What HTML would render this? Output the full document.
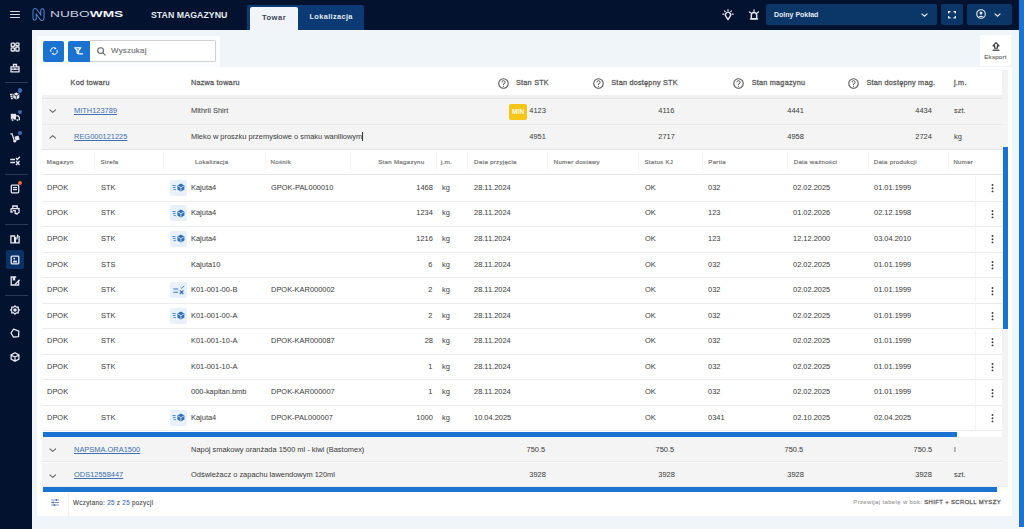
<!DOCTYPE html><html><head><meta charset="utf-8"><style>
*{box-sizing:border-box;margin:0;padding:0}
html,body{width:1024px;height:529px;overflow:hidden;background:#f0f5fa;font-family:"Liberation Sans",sans-serif;color:#333}
.a{position:absolute}
.t{position:absolute;white-space:nowrap}
.r{text-align:right}
.d{font-size:8.05px;color:#424242;-webkit-text-stroke:0.04px currentColor;transform:scaleX(0.925);transform-origin:0 50%}
.rt{transform-origin:100% 50%}
.nh{font-size:6.1px;color:#757575;letter-spacing:0.3px;-webkit-text-stroke:0.2px #757575}
.mh{font-size:7.25px;color:#5e5e5e;letter-spacing:0.24px;-webkit-text-stroke:0.3px #5e5e5e}
.lk{color:#3f72b3;text-decoration:underline;text-decoration-thickness:0.5px;text-underline-offset:1.2px}
svg{position:absolute;overflow:visible}
</style></head><body>
<div class="a" style="left:0px;top:0px;width:1019px;height:30px;background:#03122f;"></div>
<div class="a" style="left:0px;top:30px;width:32px;height:499px;background:#03122f;"></div>
<div class="a" style="left:1019px;top:0px;width:5px;height:527px;background:#1a73d0;"></div>
<div class="a" style="left:10px;top:11.2px;width:10px;height:1.3px;background:#d5d9e1;border-radius:0.6px"></div>
<div class="a" style="left:10px;top:14.2px;width:10px;height:1.3px;background:#d5d9e1;border-radius:0.6px"></div>
<div class="a" style="left:10px;top:17.2px;width:10px;height:1.3px;background:#d5d9e1;border-radius:0.6px"></div>
<svg style="left:31.5px;top:7.5px" width="13" height="13" viewBox="0 0 13 13"><defs><linearGradient id="lg" x1="0" y1="0" x2="1" y2="1"><stop offset="0" stop-color="#4a86cc"/><stop offset="1" stop-color="#6d8ad8"/></linearGradient></defs><path d="M2.6 10.6 V3 Q2.6 1.6 3.7 2.6 L9.3 10.4 Q10.4 11.4 10.4 10 V2.4" fill="none" stroke="url(#lg)" stroke-width="4.2" stroke-linecap="round" stroke-linejoin="round"/><path d="M2.6 10.6 V3 Q2.6 1.6 3.7 2.6 L9.3 10.4 Q10.4 11.4 10.4 10 V2.4" fill="none" stroke="#03122f" stroke-width="2.3" stroke-linecap="round" stroke-linejoin="round"/></svg>
<div class="t " style="left:50px;top:8px;height:12px;line-height:12px;font-size:8.7px;color:#c9cfdb;transform:scaleX(1.58);transform-origin:0 0">NUBO<b style="font-weight:900;color:#f2f4f8">WMS</b></div>
<div class="t " style="left:150.5px;top:6.5px;height:16px;line-height:16px;font-size:9.4px;font-weight:bold;color:#e6eaf0;transform:scaleX(0.935);transform-origin:0 0">STAN MAGAZYNU</div>
<div class="a" style="left:247px;top:5px;width:117px;height:25px;background:#0b3a74;border-radius:2px 2px 0 0"></div>
<div class="a" style="left:250px;top:7px;width:48px;height:23px;background:#f1f5fa;border-radius:2px 2px 0 0"></div>
<div class="t " style="left:262px;top:8.5px;height:18px;line-height:18px;font-size:7.6px;font-weight:bold;color:#3a4656;letter-spacing:0.45px">Towar</div>
<div class="t " style="left:309.5px;top:8px;height:18px;line-height:18px;font-size:7.4px;font-weight:bold;color:#e6eaf0;letter-spacing:0.35px">Lokalizacja</div>
<div class="a" style="left:766px;top:4px;width:171px;height:21px;background:#0b3768;border-radius:2px"></div>
<div class="t " style="left:774px;top:4px;height:21px;line-height:21px;font-size:7px;font-weight:bold;color:#e6eaf0">Dolny Pokład</div>
<svg style="left:921px;top:13px" width="7" height="4" viewBox="0 0 7 4"><path d="M0.6 0.6 L3.5 3.3 L6.4 0.6" fill="none" stroke="#e6eaf0" stroke-width="1.2"/></svg>
<div class="a" style="left:941px;top:4px;width:22px;height:21px;background:#0b3768;border-radius:2px"></div>
<svg style="left:948px;top:10.5px" width="8" height="7.5" viewBox="0 0 8 7.5"><path d="M0.6 2.5 V0.6 H2.6 M5.4 0.6 H7.4 V2.5 M7.4 5 V6.9 H5.4 M2.6 6.9 H0.6 V5" fill="none" stroke="#e6eaf0" stroke-width="1.2"/></svg>
<div class="a" style="left:967px;top:4px;width:45px;height:21px;background:#0b3768;border-radius:2px"></div>
<svg style="left:976px;top:9px" width="10" height="10" viewBox="0 0 10 10"><circle cx="5" cy="5" r="4.3" fill="none" stroke="#e6eaf0" stroke-width="1.1"/><circle cx="5" cy="4" r="1.5" fill="#e6eaf0"/><path d="M2.3 8 Q5 5.5 7.7 8" fill="#e6eaf0"/></svg>
<svg style="left:994px;top:13px" width="7" height="4" viewBox="0 0 7 4"><path d="M0.6 0.6 L3.5 3.3 L6.4 0.6" fill="none" stroke="#e6eaf0" stroke-width="1.2"/></svg>
<svg style="left:722px;top:8.5px" width="12" height="12" viewBox="0 0 12 12"><path d="M6 10.6 L3.9 7.4 A2.6 2.6 0 1 1 8.1 7.4 Z" fill="none" stroke="#e6eaf0" stroke-width="1.35" stroke-linejoin="round"/><path d="M6 0.6 V1.6 M2.6 1.9 L3.2 2.5 M9.4 1.9 L8.8 2.5 M0.9 5.2 H1.8 M10.2 5.2 H11.1" stroke="#e6eaf0" stroke-width="1.2" stroke-linecap="round"/></svg>
<svg style="left:747.5px;top:8.5px" width="12" height="12" viewBox="0 0 12 12"><path d="M3.3 9.8 V6.2 A2.7 2.7 0 0 1 8.7 6.2 V9.8 Z" fill="none" stroke="#e6eaf0" stroke-width="1.4" stroke-linejoin="round"/><path d="M1.8 10 H10.2" stroke="#e6eaf0" stroke-width="1.2"/><path d="M6 1 V2.2 M1.6 3 L2.5 3.9 M10.4 3 L9.5 3.9" stroke="#e6eaf0" stroke-width="1.3" stroke-linecap="round"/></svg>
<div class="a" style="left:37px;top:36px;width:183px;height:31px;background:#fbfcfe;"></div>
<div class="a" style="left:43px;top:40.5px;width:21px;height:21.5px;background:#1a73d0;border-radius:2px"></div>
<svg style="left:49.6px;top:47.3px" width="8" height="8" viewBox="0 0 8 8"><path d="M1.1 5 A2.9 2.9 0 0 1 5.3 1.2 M6.9 3 A2.9 2.9 0 0 1 2.7 6.8" fill="none" stroke="#fff" stroke-width="1"/><path d="M4.5 0.1 L6.6 1.5 L4.6 2.6 Z M3.5 7.9 L1.4 6.5 L3.4 5.4 Z" fill="#fff"/></svg>
<div class="a" style="left:68px;top:40.5px;width:22px;height:21.5px;background:#1a73d0;border-radius:2px 0 0 2px"></div>
<svg style="left:74.2px;top:46.8px" width="10" height="8" viewBox="0 0 10 8"><path d="M0.7 0.7 H6.9 L4.6 3.6 V6.9 L3 6 V3.6 Z" fill="#fff" fill-opacity="0.35" stroke="#fff" stroke-width="1.1" stroke-linejoin="round"/><path d="M5.6 6.8 H8.6" stroke="#fff" stroke-width="1.3" stroke-linecap="round"/></svg>
<div class="a" style="left:90px;top:40.3px;width:126px;height:21.7px;background:#fff;border:1px solid #cdd0d4;border-left:none;border-radius:0 2px 2px 0"></div>
<svg style="left:97.3px;top:46.8px" width="9" height="9" viewBox="0 0 9 9"><circle cx="3.6" cy="3.6" r="2.9" fill="none" stroke="#666" stroke-width="1.1"/><path d="M5.7 5.7 L8.4 8.4" stroke="#666" stroke-width="1.2"/></svg>
<div class="t " style="left:111px;top:39.6px;height:21px;line-height:21px;font-size:7.9px;color:#707070;letter-spacing:0.25px;-webkit-text-stroke:0.15px #707070">Wyszukaj</div>
<div class="a" style="left:980px;top:35px;width:31px;height:31px;background:#fff;"></div>
<svg style="left:992px;top:41.5px" width="8" height="9" viewBox="0 0 8 9"><path d="M4 0.7 L1 3.9 H2.7 V6.2 H5.3 V3.9 H7 Z" fill="none" stroke="#333" stroke-width="1.15" stroke-linejoin="round"/><path d="M0.6 8.2 H7.4" stroke="#333" stroke-width="1.2"/></svg>
<div class="t " style="left:980px;top:52.3px;height:10px;line-height:10px;font-size:6.1px;color:#6a6a6a;width:31px;text-align:center;letter-spacing:0.25px;-webkit-text-stroke:0.15px #6a6a6a">Eksport</div>
<div class="a" style="left:37px;top:67px;width:975px;height:449px;background:#fff;"></div>
<div class="a" style="left:1002px;top:70px;width:6px;height:417px;background:#f2f2f2;"></div>
<div class="t mh" style="left:70.6px;top:68px;height:30px;line-height:30px;">Kod towaru</div>
<div class="t mh" style="left:191px;top:68px;height:30px;line-height:30px;">Nazwa towaru</div>
<svg style="left:497.6px;top:77.5px" width="11" height="11" viewBox="0 0 11 11"><circle cx="5.5" cy="5.5" r="4.75" fill="none" stroke="#555" stroke-width="1.05"/><path d="M3.9 4.3 A1.6 1.6 0 1 1 5.5 5.9 V6.9" fill="none" stroke="#555" stroke-width="1"/><circle cx="5.5" cy="8.3" r="0.6" fill="#555"/></svg>
<div class="t mh" style="left:516px;top:68px;height:30px;line-height:30px;">Stan STK</div>
<svg style="left:592.7px;top:77.5px" width="11" height="11" viewBox="0 0 11 11"><circle cx="5.5" cy="5.5" r="4.75" fill="none" stroke="#555" stroke-width="1.05"/><path d="M3.9 4.3 A1.6 1.6 0 1 1 5.5 5.9 V6.9" fill="none" stroke="#555" stroke-width="1"/><circle cx="5.5" cy="8.3" r="0.6" fill="#555"/></svg>
<div class="t mh" style="left:611.3px;top:68px;height:30px;line-height:30px;">Stan dostępny STK</div>
<svg style="left:733.4px;top:77.5px" width="11" height="11" viewBox="0 0 11 11"><circle cx="5.5" cy="5.5" r="4.75" fill="none" stroke="#555" stroke-width="1.05"/><path d="M3.9 4.3 A1.6 1.6 0 1 1 5.5 5.9 V6.9" fill="none" stroke="#555" stroke-width="1"/><circle cx="5.5" cy="8.3" r="0.6" fill="#555"/></svg>
<div class="t mh" style="left:751.7px;top:68px;height:30px;line-height:30px;">Stan magazynu</div>
<svg style="left:848px;top:77.5px" width="11" height="11" viewBox="0 0 11 11"><circle cx="5.5" cy="5.5" r="4.75" fill="none" stroke="#555" stroke-width="1.05"/><path d="M3.9 4.3 A1.6 1.6 0 1 1 5.5 5.9 V6.9" fill="none" stroke="#555" stroke-width="1"/><circle cx="5.5" cy="8.3" r="0.6" fill="#555"/></svg>
<div class="t mh" style="left:866.4px;top:68px;height:30px;line-height:30px;">Stan dostępny mag.</div>
<div class="t mh" style="left:954px;top:68px;height:30px;line-height:30px;">j.m.</div>
<div class="a" style="left:42px;top:94.6px;width:960px;height:4px;background:#f1f1f1;"></div>
<div class="a" style="left:42px;top:98px;width:960px;height:1px;background:#e6e6e6;"></div>
<div class="a" style="left:42px;top:98.8px;width:966px;height:25.7px;background:#f4f4f4;"></div>
<div class="a" style="left:42px;top:123.5px;width:960px;height:1px;background:#e9e9e9;"></div>
<svg style="left:49.3px;top:109.24999999999999px" width="7.5" height="4" viewBox="0 0 7.5 4"><path d="M0.6 0.6 L3.75 3.4 L6.9 0.6" fill="none" stroke="#5c5c5c" stroke-width="1.05"/></svg>
<div class="t d lk" style="left:73.5px;top:97.89999999999999px;height:25.7px;line-height:25.7px;">MITH123789</div>
<div class="t d" style="left:190.7px;top:97.89999999999999px;height:25.7px;line-height:25.7px;">Mithril Shirt</div>
<div class="t d rt" style="right:478.5px;top:97.89999999999999px;height:25.7px;line-height:25.7px;">4123</div>
<div class="t d rt" style="right:349.5px;top:97.89999999999999px;height:25.7px;line-height:25.7px;">4116</div>
<div class="t d rt" style="right:220.5px;top:97.89999999999999px;height:25.7px;line-height:25.7px;">4441</div>
<div class="t d rt" style="right:92.29999999999995px;top:97.89999999999999px;height:25.7px;line-height:25.7px;">4434</div>
<div class="t d" style="left:954px;top:97.89999999999999px;height:25.7px;line-height:25.7px;">szt.</div>
<div class="a" style="left:509.3px;top:103.6px;width:17.6px;height:16.4px;background:#f6c519;border-radius:2px"></div>
<div class="t " style="left:509.3px;top:103.8px;height:16px;line-height:16px;width:17.6px;text-align:center;font-size:6.6px;font-weight:bold;color:#fffbea;letter-spacing:0.1px">MIN</div>
<div class="a" style="left:42px;top:124.5px;width:966px;height:25.4px;background:#f4f4f4;"></div>
<div class="a" style="left:42px;top:148.9px;width:960px;height:1px;background:#e9e9e9;"></div>
<svg style="left:49.3px;top:134.79999999999998px" width="7.5" height="4" viewBox="0 0 7.5 4"><path d="M0.6 3.4 L3.75 0.6 L6.9 3.4" fill="none" stroke="#5c5c5c" stroke-width="1.05"/></svg>
<div class="t d lk" style="left:73.5px;top:123.6px;height:25.4px;line-height:25.4px;">REG000121225</div>
<div class="t d" style="left:190.7px;top:123.6px;height:25.4px;line-height:25.4px;">Mleko w proszku przemysłowe o smaku waniliowym<span style="display:inline-block;width:0.8px;height:9px;background:#222;vertical-align:middle;margin-left:0.3px"></span></div>
<div class="t d rt" style="right:478.5px;top:123.6px;height:25.4px;line-height:25.4px;">4951</div>
<div class="t d rt" style="right:349.5px;top:123.6px;height:25.4px;line-height:25.4px;">2717</div>
<div class="t d rt" style="right:220.5px;top:123.6px;height:25.4px;line-height:25.4px;">4958</div>
<div class="t d rt" style="right:92.29999999999995px;top:123.6px;height:25.4px;line-height:25.4px;">2724</div>
<div class="t d" style="left:954px;top:123.6px;height:25.4px;line-height:25.4px;">kg</div>
<div class="a" style="left:42px;top:149px;width:960px;height:1px;background:#e6e6e6;"></div>
<div class="a" style="left:94.2px;top:153px;width:0.8px;height:18px;background:#f5f5f5;"></div>
<div class="a" style="left:163.2px;top:153px;width:0.8px;height:18px;background:#f5f5f5;"></div>
<div class="a" style="left:264.5px;top:153px;width:0.8px;height:18px;background:#f5f5f5;"></div>
<div class="a" style="left:350.3px;top:153px;width:0.8px;height:18px;background:#f5f5f5;"></div>
<div class="a" style="left:435.7px;top:153px;width:0.8px;height:18px;background:#f5f5f5;"></div>
<div class="a" style="left:467.4px;top:153px;width:0.8px;height:18px;background:#f5f5f5;"></div>
<div class="a" style="left:547.3px;top:153px;width:0.8px;height:18px;background:#f5f5f5;"></div>
<div class="a" style="left:638.3px;top:153px;width:0.8px;height:18px;background:#f5f5f5;"></div>
<div class="a" style="left:701.7px;top:153px;width:0.8px;height:18px;background:#f5f5f5;"></div>
<div class="a" style="left:787px;top:153px;width:0.8px;height:18px;background:#f5f5f5;"></div>
<div class="a" style="left:867.6px;top:153px;width:0.8px;height:18px;background:#f5f5f5;"></div>
<div class="a" style="left:947.6px;top:153px;width:0.8px;height:18px;background:#f5f5f5;"></div>
<div class="t nh" style="left:46.8px;top:150px;height:24.5px;line-height:24.5px;">Magazyn</div>
<div class="t nh" style="left:100.5px;top:150px;height:24.5px;line-height:24.5px;">Strefa</div>
<div class="t nh" style="left:195px;top:150px;height:24.5px;line-height:24.5px;">Lokalizacja</div>
<div class="t nh" style="left:270.6px;top:150px;height:24.5px;line-height:24.5px;">Nośnik</div>
<div class="t nh" style="left:474px;top:150px;height:24.5px;line-height:24.5px;">Data przyjęcia</div>
<div class="t nh" style="left:553.7px;top:150px;height:24.5px;line-height:24.5px;">Numer dostawy</div>
<div class="t nh" style="left:644.4px;top:150px;height:24.5px;line-height:24.5px;">Status KJ</div>
<div class="t nh" style="left:708.3px;top:150px;height:24.5px;line-height:24.5px;">Partia</div>
<div class="t nh" style="left:793.7px;top:150px;height:24.5px;line-height:24.5px;">Data ważności</div>
<div class="t nh" style="left:873.7px;top:150px;height:24.5px;line-height:24.5px;">Data produkcji</div>
<div class="t nh" style="left:953.4px;top:150px;height:24.5px;line-height:24.5px;">Numer</div>
<div class="t nh rt" style="right:599.5px;top:150px;height:24.5px;line-height:24.5px;">Stan Magazynu</div>
<div class="t nh" style="left:441px;top:150px;height:24.5px;line-height:24.5px;">j.m.</div>
<div class="a" style="left:42px;top:173.9px;width:960px;height:1.5px;background:#e8e8e8;"></div>
<div class="a" style="left:975px;top:176.45px;width:0.8px;height:23.55px;background:#f5f5f5;"></div>
<div class="t d" style="left:47px;top:174.85px;height:25.55px;line-height:25.55px;">DPOK</div>
<div class="t d" style="left:100.5px;top:174.85px;height:25.55px;line-height:25.55px;">STK</div>
<div class="a" style="left:170px;top:179.75px;width:16.5px;height:16.2px;background:#e8f1fb;border-radius:2px"></div>
<svg style="left:171.5px;top:183.25px" width="13" height="9" viewBox="0 0 13 9"><path d="M0.4 2.6 H3.6 M0.9 4.6 H3.6 M1.6 6.6 H3.8" stroke="#3a78c0" stroke-width="0.9"/><path d="M8.9 0.6 L12.4 2.5 V6.5 L8.9 8.4 L5.4 6.5 V2.5 Z" fill="#2f6fb8"/><path d="M5.9 3 L8.9 4.6 L11.9 3 M8.9 4.6 V8" fill="none" stroke="#e3eefa" stroke-width="0.8"/></svg>
<div class="t d" style="left:191px;top:174.85px;height:25.55px;line-height:25.55px;">Kajuta4</div>
<div class="t d" style="left:271px;top:174.85px;height:25.55px;line-height:25.55px;">GPOK-PAL000010</div>
<div class="t d rt" style="right:591.2px;top:174.85px;height:25.55px;line-height:25.55px;">1468</div>
<div class="t d" style="left:441.6px;top:174.85px;height:25.55px;line-height:25.55px;">kg</div>
<div class="t d" style="left:473.8px;top:174.85px;height:25.55px;line-height:25.55px;">28.11.2024</div>
<div class="t d" style="left:644.8px;top:174.85px;height:25.55px;line-height:25.55px;">OK</div>
<div class="t d" style="left:708.3px;top:174.85px;height:25.55px;line-height:25.55px;">032</div>
<div class="t d" style="left:793.2px;top:174.85px;height:25.55px;line-height:25.55px;">02.02.2025</div>
<div class="t d" style="left:873.6px;top:174.85px;height:25.55px;line-height:25.55px;">01.01.1999</div>
<svg style="left:990.6px;top:184.35px" width="3" height="9" viewBox="0 0 3 9"><circle cx="1.5" cy="1" r="0.95" fill="#3a3a3a"/><circle cx="1.5" cy="4.2" r="0.95" fill="#3a3a3a"/><circle cx="1.5" cy="7.4" r="0.95" fill="#3a3a3a"/></svg>
<div class="a" style="left:42px;top:200.5px;width:960px;height:1px;background:#ededed;"></div>
<div class="a" style="left:975px;top:202.0px;width:0.8px;height:23.55px;background:#f5f5f5;"></div>
<div class="t d" style="left:47px;top:200.4px;height:25.55px;line-height:25.55px;">DPOK</div>
<div class="t d" style="left:100.5px;top:200.4px;height:25.55px;line-height:25.55px;">STK</div>
<div class="a" style="left:170px;top:205.3px;width:16.5px;height:16.2px;background:#e8f1fb;border-radius:2px"></div>
<svg style="left:171.5px;top:208.8px" width="13" height="9" viewBox="0 0 13 9"><path d="M0.4 2.6 H3.6 M0.9 4.6 H3.6 M1.6 6.6 H3.8" stroke="#3a78c0" stroke-width="0.9"/><path d="M8.9 0.6 L12.4 2.5 V6.5 L8.9 8.4 L5.4 6.5 V2.5 Z" fill="#2f6fb8"/><path d="M5.9 3 L8.9 4.6 L11.9 3 M8.9 4.6 V8" fill="none" stroke="#e3eefa" stroke-width="0.8"/></svg>
<div class="t d" style="left:191px;top:200.4px;height:25.55px;line-height:25.55px;">Kajuta4</div>
<div class="t d" style="left:271px;top:200.4px;height:25.55px;line-height:25.55px;"></div>
<div class="t d rt" style="right:591.2px;top:200.4px;height:25.55px;line-height:25.55px;">1234</div>
<div class="t d" style="left:441.6px;top:200.4px;height:25.55px;line-height:25.55px;">kg</div>
<div class="t d" style="left:473.8px;top:200.4px;height:25.55px;line-height:25.55px;">28.11.2024</div>
<div class="t d" style="left:644.8px;top:200.4px;height:25.55px;line-height:25.55px;">OK</div>
<div class="t d" style="left:708.3px;top:200.4px;height:25.55px;line-height:25.55px;">123</div>
<div class="t d" style="left:793.2px;top:200.4px;height:25.55px;line-height:25.55px;">01.02.2026</div>
<div class="t d" style="left:873.6px;top:200.4px;height:25.55px;line-height:25.55px;">02.12.1998</div>
<svg style="left:990.6px;top:209.9px" width="3" height="9" viewBox="0 0 3 9"><circle cx="1.5" cy="1" r="0.95" fill="#3a3a3a"/><circle cx="1.5" cy="4.2" r="0.95" fill="#3a3a3a"/><circle cx="1.5" cy="7.4" r="0.95" fill="#3a3a3a"/></svg>
<div class="a" style="left:42px;top:226.05px;width:960px;height:1px;background:#ededed;"></div>
<div class="a" style="left:975px;top:227.54999999999998px;width:0.8px;height:23.55px;background:#f5f5f5;"></div>
<div class="t d" style="left:47px;top:225.95px;height:25.55px;line-height:25.55px;">DPOK</div>
<div class="t d" style="left:100.5px;top:225.95px;height:25.55px;line-height:25.55px;">STK</div>
<div class="a" style="left:170px;top:230.85px;width:16.5px;height:16.2px;background:#e8f1fb;border-radius:2px"></div>
<svg style="left:171.5px;top:234.35px" width="13" height="9" viewBox="0 0 13 9"><path d="M0.4 2.6 H3.6 M0.9 4.6 H3.6 M1.6 6.6 H3.8" stroke="#3a78c0" stroke-width="0.9"/><path d="M8.9 0.6 L12.4 2.5 V6.5 L8.9 8.4 L5.4 6.5 V2.5 Z" fill="#2f6fb8"/><path d="M5.9 3 L8.9 4.6 L11.9 3 M8.9 4.6 V8" fill="none" stroke="#e3eefa" stroke-width="0.8"/></svg>
<div class="t d" style="left:191px;top:225.95px;height:25.55px;line-height:25.55px;">Kajuta4</div>
<div class="t d" style="left:271px;top:225.95px;height:25.55px;line-height:25.55px;"></div>
<div class="t d rt" style="right:591.2px;top:225.95px;height:25.55px;line-height:25.55px;">1216</div>
<div class="t d" style="left:441.6px;top:225.95px;height:25.55px;line-height:25.55px;">kg</div>
<div class="t d" style="left:473.8px;top:225.95px;height:25.55px;line-height:25.55px;">28.11.2024</div>
<div class="t d" style="left:644.8px;top:225.95px;height:25.55px;line-height:25.55px;">OK</div>
<div class="t d" style="left:708.3px;top:225.95px;height:25.55px;line-height:25.55px;">123</div>
<div class="t d" style="left:793.2px;top:225.95px;height:25.55px;line-height:25.55px;">12.12.2000</div>
<div class="t d" style="left:873.6px;top:225.95px;height:25.55px;line-height:25.55px;">03.04.2010</div>
<svg style="left:990.6px;top:235.45px" width="3" height="9" viewBox="0 0 3 9"><circle cx="1.5" cy="1" r="0.95" fill="#3a3a3a"/><circle cx="1.5" cy="4.2" r="0.95" fill="#3a3a3a"/><circle cx="1.5" cy="7.4" r="0.95" fill="#3a3a3a"/></svg>
<div class="a" style="left:42px;top:251.6px;width:960px;height:1px;background:#ededed;"></div>
<div class="a" style="left:975px;top:253.1px;width:0.8px;height:23.55px;background:#f5f5f5;"></div>
<div class="t d" style="left:47px;top:251.5px;height:25.55px;line-height:25.55px;">DPOK</div>
<div class="t d" style="left:100.5px;top:251.5px;height:25.55px;line-height:25.55px;">STS</div>
<div class="t d" style="left:191px;top:251.5px;height:25.55px;line-height:25.55px;">Kajuta10</div>
<div class="t d" style="left:271px;top:251.5px;height:25.55px;line-height:25.55px;"></div>
<div class="t d rt" style="right:591.2px;top:251.5px;height:25.55px;line-height:25.55px;">6</div>
<div class="t d" style="left:441.6px;top:251.5px;height:25.55px;line-height:25.55px;">kg</div>
<div class="t d" style="left:473.8px;top:251.5px;height:25.55px;line-height:25.55px;">28.11.2024</div>
<div class="t d" style="left:644.8px;top:251.5px;height:25.55px;line-height:25.55px;">OK</div>
<div class="t d" style="left:708.3px;top:251.5px;height:25.55px;line-height:25.55px;">032</div>
<div class="t d" style="left:793.2px;top:251.5px;height:25.55px;line-height:25.55px;">02.02.2025</div>
<div class="t d" style="left:873.6px;top:251.5px;height:25.55px;line-height:25.55px;">01.01.1999</div>
<svg style="left:990.6px;top:261.0px" width="3" height="9" viewBox="0 0 3 9"><circle cx="1.5" cy="1" r="0.95" fill="#3a3a3a"/><circle cx="1.5" cy="4.2" r="0.95" fill="#3a3a3a"/><circle cx="1.5" cy="7.4" r="0.95" fill="#3a3a3a"/></svg>
<div class="a" style="left:42px;top:277.15px;width:960px;height:1px;background:#ededed;"></div>
<div class="a" style="left:975px;top:278.65px;width:0.8px;height:23.55px;background:#f5f5f5;"></div>
<div class="t d" style="left:47px;top:277.04999999999995px;height:25.55px;line-height:25.55px;">DPOK</div>
<div class="t d" style="left:100.5px;top:277.04999999999995px;height:25.55px;line-height:25.55px;">STK</div>
<div class="a" style="left:170px;top:281.95px;width:16.5px;height:16.2px;background:#e8f1fb;border-radius:2px"></div>
<svg style="left:172.5px;top:284.84999999999997px" width="12" height="10" viewBox="0 0 12 10"><path d="M0.3 4 H5.2 M0.3 7.2 H5.2" stroke="#3a78c0" stroke-width="1.1"/><path d="M6.8 5.3 L10.4 9 M10.4 5.3 L6.8 9" fill="none" stroke="#2f6fb8" stroke-width="1.2"/><path d="M7.6 2.3 L8.8 3.4 L11.2 0.8" fill="none" stroke="#3a78c0" stroke-width="0.9"/></svg>
<div class="t d" style="left:191px;top:277.04999999999995px;height:25.55px;line-height:25.55px;">K01-001-00-B</div>
<div class="t d" style="left:271px;top:277.04999999999995px;height:25.55px;line-height:25.55px;">DPOK-KAR000002</div>
<div class="t d rt" style="right:591.2px;top:277.04999999999995px;height:25.55px;line-height:25.55px;">2</div>
<div class="t d" style="left:441.6px;top:277.04999999999995px;height:25.55px;line-height:25.55px;">kg</div>
<div class="t d" style="left:473.8px;top:277.04999999999995px;height:25.55px;line-height:25.55px;">28.11.2024</div>
<div class="t d" style="left:644.8px;top:277.04999999999995px;height:25.55px;line-height:25.55px;">OK</div>
<div class="t d" style="left:708.3px;top:277.04999999999995px;height:25.55px;line-height:25.55px;">032</div>
<div class="t d" style="left:793.2px;top:277.04999999999995px;height:25.55px;line-height:25.55px;">02.02.2025</div>
<div class="t d" style="left:873.6px;top:277.04999999999995px;height:25.55px;line-height:25.55px;">01.01.1999</div>
<svg style="left:990.6px;top:286.54999999999995px" width="3" height="9" viewBox="0 0 3 9"><circle cx="1.5" cy="1" r="0.95" fill="#3a3a3a"/><circle cx="1.5" cy="4.2" r="0.95" fill="#3a3a3a"/><circle cx="1.5" cy="7.4" r="0.95" fill="#3a3a3a"/></svg>
<div class="a" style="left:42px;top:302.7px;width:960px;height:1px;background:#ededed;"></div>
<div class="a" style="left:975px;top:304.2px;width:0.8px;height:23.55px;background:#f5f5f5;"></div>
<div class="t d" style="left:47px;top:302.59999999999997px;height:25.55px;line-height:25.55px;">DPOK</div>
<div class="t d" style="left:100.5px;top:302.59999999999997px;height:25.55px;line-height:25.55px;">STK</div>
<div class="a" style="left:170px;top:307.5px;width:16.5px;height:16.2px;background:#e8f1fb;border-radius:2px"></div>
<svg style="left:171.5px;top:311.0px" width="13" height="9" viewBox="0 0 13 9"><path d="M0.4 2.6 H3.6 M0.9 4.6 H3.6 M1.6 6.6 H3.8" stroke="#3a78c0" stroke-width="0.9"/><path d="M8.9 0.6 L12.4 2.5 V6.5 L8.9 8.4 L5.4 6.5 V2.5 Z" fill="#2f6fb8"/><path d="M5.9 3 L8.9 4.6 L11.9 3 M8.9 4.6 V8" fill="none" stroke="#e3eefa" stroke-width="0.8"/></svg>
<div class="t d" style="left:191px;top:302.59999999999997px;height:25.55px;line-height:25.55px;">K01-001-00-A</div>
<div class="t d" style="left:271px;top:302.59999999999997px;height:25.55px;line-height:25.55px;"></div>
<div class="t d rt" style="right:591.2px;top:302.59999999999997px;height:25.55px;line-height:25.55px;">2</div>
<div class="t d" style="left:441.6px;top:302.59999999999997px;height:25.55px;line-height:25.55px;">kg</div>
<div class="t d" style="left:473.8px;top:302.59999999999997px;height:25.55px;line-height:25.55px;">28.11.2024</div>
<div class="t d" style="left:644.8px;top:302.59999999999997px;height:25.55px;line-height:25.55px;">OK</div>
<div class="t d" style="left:708.3px;top:302.59999999999997px;height:25.55px;line-height:25.55px;">032</div>
<div class="t d" style="left:793.2px;top:302.59999999999997px;height:25.55px;line-height:25.55px;">02.02.2025</div>
<div class="t d" style="left:873.6px;top:302.59999999999997px;height:25.55px;line-height:25.55px;">01.01.1999</div>
<svg style="left:990.6px;top:312.09999999999997px" width="3" height="9" viewBox="0 0 3 9"><circle cx="1.5" cy="1" r="0.95" fill="#3a3a3a"/><circle cx="1.5" cy="4.2" r="0.95" fill="#3a3a3a"/><circle cx="1.5" cy="7.4" r="0.95" fill="#3a3a3a"/></svg>
<div class="a" style="left:42px;top:328.25px;width:960px;height:1px;background:#ededed;"></div>
<div class="a" style="left:975px;top:329.75px;width:0.8px;height:23.55px;background:#f5f5f5;"></div>
<div class="t d" style="left:47px;top:328.15px;height:25.55px;line-height:25.55px;">DPOK</div>
<div class="t d" style="left:100.5px;top:328.15px;height:25.55px;line-height:25.55px;">STK</div>
<div class="t d" style="left:191px;top:328.15px;height:25.55px;line-height:25.55px;">K01-001-10-A</div>
<div class="t d" style="left:271px;top:328.15px;height:25.55px;line-height:25.55px;">DPOK-KAR000087</div>
<div class="t d rt" style="right:591.2px;top:328.15px;height:25.55px;line-height:25.55px;">28</div>
<div class="t d" style="left:441.6px;top:328.15px;height:25.55px;line-height:25.55px;">kg</div>
<div class="t d" style="left:473.8px;top:328.15px;height:25.55px;line-height:25.55px;">28.11.2024</div>
<div class="t d" style="left:644.8px;top:328.15px;height:25.55px;line-height:25.55px;">OK</div>
<div class="t d" style="left:708.3px;top:328.15px;height:25.55px;line-height:25.55px;">032</div>
<div class="t d" style="left:793.2px;top:328.15px;height:25.55px;line-height:25.55px;">02.02.2025</div>
<div class="t d" style="left:873.6px;top:328.15px;height:25.55px;line-height:25.55px;">01.01.1999</div>
<svg style="left:990.6px;top:337.65px" width="3" height="9" viewBox="0 0 3 9"><circle cx="1.5" cy="1" r="0.95" fill="#3a3a3a"/><circle cx="1.5" cy="4.2" r="0.95" fill="#3a3a3a"/><circle cx="1.5" cy="7.4" r="0.95" fill="#3a3a3a"/></svg>
<div class="a" style="left:42px;top:353.8px;width:960px;height:1px;background:#ededed;"></div>
<div class="a" style="left:975px;top:355.29999999999995px;width:0.8px;height:23.55px;background:#f5f5f5;"></div>
<div class="t d" style="left:47px;top:353.69999999999993px;height:25.55px;line-height:25.55px;">DPOK</div>
<div class="t d" style="left:100.5px;top:353.69999999999993px;height:25.55px;line-height:25.55px;">STK</div>
<div class="t d" style="left:191px;top:353.69999999999993px;height:25.55px;line-height:25.55px;">K01-001-10-A</div>
<div class="t d" style="left:271px;top:353.69999999999993px;height:25.55px;line-height:25.55px;"></div>
<div class="t d rt" style="right:591.2px;top:353.69999999999993px;height:25.55px;line-height:25.55px;">1</div>
<div class="t d" style="left:441.6px;top:353.69999999999993px;height:25.55px;line-height:25.55px;">kg</div>
<div class="t d" style="left:473.8px;top:353.69999999999993px;height:25.55px;line-height:25.55px;">28.11.2024</div>
<div class="t d" style="left:644.8px;top:353.69999999999993px;height:25.55px;line-height:25.55px;">OK</div>
<div class="t d" style="left:708.3px;top:353.69999999999993px;height:25.55px;line-height:25.55px;">032</div>
<div class="t d" style="left:793.2px;top:353.69999999999993px;height:25.55px;line-height:25.55px;">02.02.2025</div>
<div class="t d" style="left:873.6px;top:353.69999999999993px;height:25.55px;line-height:25.55px;">01.01.1999</div>
<svg style="left:990.6px;top:363.19999999999993px" width="3" height="9" viewBox="0 0 3 9"><circle cx="1.5" cy="1" r="0.95" fill="#3a3a3a"/><circle cx="1.5" cy="4.2" r="0.95" fill="#3a3a3a"/><circle cx="1.5" cy="7.4" r="0.95" fill="#3a3a3a"/></svg>
<div class="a" style="left:42px;top:379.34999999999997px;width:960px;height:1px;background:#ededed;"></div>
<div class="a" style="left:975px;top:380.85px;width:0.8px;height:23.55px;background:#f5f5f5;"></div>
<div class="t d" style="left:47px;top:379.25px;height:25.55px;line-height:25.55px;">DPOK</div>
<div class="t d" style="left:100.5px;top:379.25px;height:25.55px;line-height:25.55px;"></div>
<div class="t d" style="left:191px;top:379.25px;height:25.55px;line-height:25.55px;">000-kapitan.bmb</div>
<div class="t d" style="left:271px;top:379.25px;height:25.55px;line-height:25.55px;">DPOK-KAR000007</div>
<div class="t d rt" style="right:591.2px;top:379.25px;height:25.55px;line-height:25.55px;">1</div>
<div class="t d" style="left:441.6px;top:379.25px;height:25.55px;line-height:25.55px;">kg</div>
<div class="t d" style="left:473.8px;top:379.25px;height:25.55px;line-height:25.55px;">28.11.2024</div>
<div class="t d" style="left:644.8px;top:379.25px;height:25.55px;line-height:25.55px;">OK</div>
<div class="t d" style="left:708.3px;top:379.25px;height:25.55px;line-height:25.55px;">032</div>
<div class="t d" style="left:793.2px;top:379.25px;height:25.55px;line-height:25.55px;">02.02.2025</div>
<div class="t d" style="left:873.6px;top:379.25px;height:25.55px;line-height:25.55px;">01.01.1999</div>
<svg style="left:990.6px;top:388.75px" width="3" height="9" viewBox="0 0 3 9"><circle cx="1.5" cy="1" r="0.95" fill="#3a3a3a"/><circle cx="1.5" cy="4.2" r="0.95" fill="#3a3a3a"/><circle cx="1.5" cy="7.4" r="0.95" fill="#3a3a3a"/></svg>
<div class="a" style="left:42px;top:404.90000000000003px;width:960px;height:1px;background:#ededed;"></div>
<div class="a" style="left:975px;top:406.4px;width:0.8px;height:23.55px;background:#f5f5f5;"></div>
<div class="t d" style="left:47px;top:404.79999999999995px;height:25.55px;line-height:25.55px;">DPOK</div>
<div class="t d" style="left:100.5px;top:404.79999999999995px;height:25.55px;line-height:25.55px;">STK</div>
<div class="a" style="left:170px;top:409.7px;width:16.5px;height:16.2px;background:#e8f1fb;border-radius:2px"></div>
<svg style="left:171.5px;top:413.2px" width="13" height="9" viewBox="0 0 13 9"><path d="M0.4 2.6 H3.6 M0.9 4.6 H3.6 M1.6 6.6 H3.8" stroke="#3a78c0" stroke-width="0.9"/><path d="M8.9 0.6 L12.4 2.5 V6.5 L8.9 8.4 L5.4 6.5 V2.5 Z" fill="#2f6fb8"/><path d="M5.9 3 L8.9 4.6 L11.9 3 M8.9 4.6 V8" fill="none" stroke="#e3eefa" stroke-width="0.8"/></svg>
<div class="t d" style="left:191px;top:404.79999999999995px;height:25.55px;line-height:25.55px;">Kajuta4</div>
<div class="t d" style="left:271px;top:404.79999999999995px;height:25.55px;line-height:25.55px;">DPOK-PAL000007</div>
<div class="t d rt" style="right:591.2px;top:404.79999999999995px;height:25.55px;line-height:25.55px;">1000</div>
<div class="t d" style="left:441.6px;top:404.79999999999995px;height:25.55px;line-height:25.55px;">kg</div>
<div class="t d" style="left:473.8px;top:404.79999999999995px;height:25.55px;line-height:25.55px;">10.04.2025</div>
<div class="t d" style="left:644.8px;top:404.79999999999995px;height:25.55px;line-height:25.55px;">OK</div>
<div class="t d" style="left:708.3px;top:404.79999999999995px;height:25.55px;line-height:25.55px;">0341</div>
<div class="t d" style="left:793.2px;top:404.79999999999995px;height:25.55px;line-height:25.55px;">02.10.2025</div>
<div class="t d" style="left:873.6px;top:404.79999999999995px;height:25.55px;line-height:25.55px;">02.04.2025</div>
<svg style="left:990.6px;top:414.29999999999995px" width="3" height="9" viewBox="0 0 3 9"><circle cx="1.5" cy="1" r="0.95" fill="#3a3a3a"/><circle cx="1.5" cy="4.2" r="0.95" fill="#3a3a3a"/><circle cx="1.5" cy="7.4" r="0.95" fill="#3a3a3a"/></svg>
<div class="a" style="left:42px;top:430.45px;width:960px;height:1px;background:#ededed;"></div>
<div class="a" style="left:1002.7px;top:147.2px;width:5.1px;height:181.7px;background:#1a73d0;"></div>
<div class="a" style="left:42.5px;top:431.8px;width:914.7px;height:4.8px;background:#1a73d0;"></div>
<div class="a" style="left:42px;top:436.6px;width:966px;height:25.7px;background:#f4f4f4;"></div>
<div class="a" style="left:42px;top:461.3px;width:960px;height:1px;background:#e9e9e9;"></div>
<svg style="left:49.3px;top:448.05000000000007px" width="7.5" height="4" viewBox="0 0 7.5 4"><path d="M0.6 0.6 L3.75 3.4 L6.9 0.6" fill="none" stroke="#5c5c5c" stroke-width="1.05"/></svg>
<div class="t d lk" style="left:73.5px;top:436.70000000000005px;height:25.7px;line-height:25.7px;">NAPSMA.ORA1500</div>
<div class="t d" style="left:190.7px;top:436.70000000000005px;height:25.7px;line-height:25.7px;">Napój smakowy oranżada 1500 ml - kiwi (Bastomex)</div>
<div class="t d rt" style="right:478.5px;top:436.70000000000005px;height:25.7px;line-height:25.7px;">750.5</div>
<div class="t d rt" style="right:349.5px;top:436.70000000000005px;height:25.7px;line-height:25.7px;">750.5</div>
<div class="t d rt" style="right:220.5px;top:436.70000000000005px;height:25.7px;line-height:25.7px;">750.5</div>
<div class="t d rt" style="right:92.29999999999995px;top:436.70000000000005px;height:25.7px;line-height:25.7px;">750.5</div>
<div class="t d" style="left:954px;top:436.70000000000005px;height:25.7px;line-height:25.7px;">l</div>
<div class="a" style="left:42px;top:462.5px;width:966px;height:24.7px;background:#f4f4f4;"></div>
<div class="a" style="left:42px;top:486.2px;width:960px;height:1px;background:#e9e9e9;"></div>
<svg style="left:49.3px;top:473.75px" width="7.5" height="4" viewBox="0 0 7.5 4"><path d="M0.6 0.6 L3.75 3.4 L6.9 0.6" fill="none" stroke="#5c5c5c" stroke-width="1.05"/></svg>
<div class="t d lk" style="left:73.5px;top:462.9px;height:24.7px;line-height:24.7px;">ODS12558447</div>
<div class="t d" style="left:190.7px;top:462.9px;height:24.7px;line-height:24.7px;">Odświeżacz o zapachu lawendowym 120ml</div>
<div class="t d rt" style="right:478.5px;top:462.9px;height:24.7px;line-height:24.7px;">3928</div>
<div class="t d rt" style="right:349.5px;top:462.9px;height:24.7px;line-height:24.7px;">3928</div>
<div class="t d rt" style="right:220.5px;top:462.9px;height:24.7px;line-height:24.7px;">3928</div>
<div class="t d rt" style="right:92.29999999999995px;top:462.9px;height:24.7px;line-height:24.7px;">3928</div>
<div class="t d" style="left:954px;top:462.9px;height:24.7px;line-height:24.7px;">szt.</div>
<div class="a" style="left:42.5px;top:487.2px;width:954.5px;height:5px;background:#1a73d0;"></div>
<svg style="left:50.8px;top:498.7px" width="8" height="7" viewBox="0 0 8 7"><path d="M0 1 H8 M0 3.5 H8 M0 6 H8" stroke="#6d8fb8" stroke-width="0.9"/><path d="M5.4 0 V2 M2.2 2.5 V4.5 M3.4 5 V7" stroke="#4f77a8" stroke-width="1.3"/></svg>
<div class="a" style="left:68px;top:492.5px;width:0.8px;height:23px;background:#efefef;"></div>
<div class="t " style="left:73px;top:492.5px;height:19px;line-height:19px;font-size:6.3px;color:#4a4a4a;letter-spacing:0.3px;-webkit-text-stroke:0.12px currentColor">Wczytano: <span style="color:#3a72b8">25</span> z <span style="color:#3a72b8">25</span> pozycji</div>
<div class="t  rt" style="right:23px;top:492.5px;height:19px;line-height:19px;font-size:5.9px;color:#999;letter-spacing:0.39px;-webkit-text-stroke:0.1px #999">Przewijaj tabelę w bok: <span style="color:#666;-webkit-text-stroke:0.3px #666">SHIFT + SCROLL MYSZY</span></div>
<div class="a" style="left:4.5px;top:82px;width:23.5px;height:0.8px;background:#2a3a58;"></div>
<div class="a" style="left:4.5px;top:174.4px;width:23.5px;height:0.8px;background:#2a3a58;"></div>
<div class="a" style="left:4.5px;top:224px;width:23.5px;height:0.8px;background:#2a3a58;"></div>
<div class="a" style="left:4.5px;top:294.8px;width:23.5px;height:0.8px;background:#2a3a58;"></div>
<div class="a" style="left:5.5px;top:249.8px;width:18.8px;height:18.8px;background:#0b3268;border-radius:2px"></div>
<svg style="left:10px;top:41.9px" width="10" height="10" viewBox="0 0 10 10"><rect x="1.2" y="1.2" width="3.2" height="3.2" rx="0.6" fill="none" stroke="#e6e9ef" stroke-width="1.3"/><rect x="5.8" y="1.2" width="3.2" height="2.4" rx="0.6" fill="none" stroke="#e6e9ef" stroke-width="1.3"/><rect x="1.2" y="5.8" width="3.2" height="3.2" rx="0.6" fill="none" stroke="#e6e9ef" stroke-width="1.3"/><rect x="5.8" y="5" width="3.2" height="4" rx="0.6" fill="none" stroke="#e6e9ef" stroke-width="1.3"/></svg>
<svg style="left:10px;top:63.2px" width="10" height="10" viewBox="0 0 10 10"><path d="M1 3.8 H9 V8.8 H1 Z M3.5 3.8 V1.5 H6.5 V3.8 M1 6.2 H9" fill="none" stroke="#e6e9ef" stroke-width="1.3"/><rect x="4.2" y="5.4" width="1.6" height="1.6" fill="#e6e9ef"/></svg>
<svg style="left:10px;top:90.8px" width="10" height="10" viewBox="0 0 10 10"><path d="M0 3.5 H2.6 M0.5 5.5 H2.6 M1 7.5 H2.8" fill="none" stroke="#e6e9ef" stroke-width="1.3"/><path d="M6.3 1.4 L9.3 3.1 V6.9 L6.3 8.6 L3.3 6.9 V3.1 Z" fill="#e6e9ef"/><path d="M3.6 3.3 L6.3 4.9 L9 3.3 M6.3 4.9 V8.3" fill="none" stroke="#03122f" stroke-width="0.8"/></svg>
<div class="a" style="left:17.6px;top:88.39999999999999px;width:4.2px;height:4.2px;background:#3a6cb5;border-radius:50%"></div>
<svg style="left:10px;top:112.4px" width="10" height="10" viewBox="0 0 10 10"><path d="M0.8 1.8 H6 V7.6 H0.8 Z" fill="#e6e9ef"/><path d="M6 3.8 H8 L9.3 5.4 V7.6 H6" fill="none" stroke="#e6e9ef" stroke-width="1.3"/><circle cx="2.6" cy="8.1" r="1.2" fill="#e6e9ef" stroke="#03122f" stroke-width="0.6"/><circle cx="7.5" cy="8.1" r="1.2" fill="#e6e9ef" stroke="#03122f" stroke-width="0.6"/></svg>
<div class="a" style="left:17.6px;top:110.0px;width:4.2px;height:4.2px;background:#3a6cb5;border-radius:50%"></div>
<svg style="left:10px;top:132.9px" width="10" height="10" viewBox="0 0 10 10"><path d="M0.4 0.8 H2 L4.3 7.6" fill="none" stroke="#e6e9ef" stroke-width="1.3"/><circle cx="4.8" cy="8.2" r="1.4" fill="#e6e9ef"/><rect x="5" y="3" width="4.2" height="4.2" transform="rotate(-18 7.1 5.1)" fill="#e6e9ef"/></svg>
<div class="a" style="left:17.6px;top:130.5px;width:4.2px;height:4.2px;background:#3a6cb5;border-radius:50%"></div>
<svg style="left:10px;top:155.5px" width="10" height="10" viewBox="0 0 10 10"><path d="M0.3 3.5 H5 M0.3 6.5 H5" fill="none" stroke="#e6e9ef" stroke-width="1.3"/><path d="M6 5 L9.5 9 M9.5 5 L6 9 M6 2 L7.3 3.5 L9.8 0.8" fill="none" stroke="#e6e9ef" stroke-width="1.3"/></svg>
<svg style="left:10px;top:183.6px" width="10" height="10" viewBox="0 0 10 10"><rect x="1.3" y="1.1" width="7.4" height="7.8" rx="0.8" fill="none" stroke="#e6e9ef" stroke-width="1.3"/><path d="M3 3.7 H7 M3 5.6 H7" fill="none" stroke="#e6e9ef" stroke-width="1.3"/></svg>
<div class="a" style="left:17.6px;top:181.2px;width:4.2px;height:4.2px;background:#e8692a;border-radius:50%"></div>
<svg style="left:10px;top:204.8px" width="10" height="10" viewBox="0 0 10 10"><path d="M2.8 3.6 V1 H7.2 V3.6 M1 3.6 H9 V6.5 M2.8 7 H1 V3.6" fill="none" stroke="#e6e9ef" stroke-width="1.3"/><path d="M2.8 5.6 H5.2 V9.2" fill="none" stroke="#e6e9ef" stroke-width="1.3"/><path d="M5.8 8 L7 9.2 L9.6 6.6" fill="none" stroke="#e6e9ef" stroke-width="1.3"/></svg>
<svg style="left:10px;top:233.5px" width="10" height="10" viewBox="0 0 10 10"><path d="M0.9 2 H4.6 V8.8 H0.9 Z M5.4 3 V8.8 H9.1 V2" fill="none" stroke="#e6e9ef" stroke-width="1.3"/><path d="M7.2 0.2 L8.6 1.2 L7 6 L6.2 5.2 Z" fill="#e6e9ef"/></svg>
<svg style="left:10px;top:254.5px" width="10" height="10" viewBox="0 0 10 10"><rect x="1.2" y="1.2" width="7.6" height="7.6" rx="0.8" fill="none" stroke="#e6e9ef" stroke-width="1.3"/><path d="M2.6 7.4 L4.2 5 L5.2 6.2 L6.1 5.1 L7.4 7.4 Z" fill="#e6e9ef"/><circle cx="4.2" cy="3.6" r="0.9" fill="#e6e9ef"/></svg>
<svg style="left:10px;top:275.5px" width="10" height="10" viewBox="0 0 10 10"><path d="M8.6 4.4 V9 H1.2 V1 H6.2" fill="none" stroke="#e6e9ef" stroke-width="1.3"/><path d="M2.8 1 V5 L4 4 L5.2 5 V1" fill="#e6e9ef"/><path d="M5.2 8.2 L9.6 3.8" fill="none" stroke="#e6e9ef" stroke-width="1.3"/></svg>
<svg style="left:10px;top:305.2px" width="10" height="10" viewBox="0 0 10 10"><path d="M5 0.9 L6.3 2.2 L8.2 2.2 L8.2 4 L9.3 5 L8.2 6 L8.2 7.8 L6.3 7.8 L5 9.1 L3.7 7.8 L1.8 7.8 L1.8 6 L0.7 5 L1.8 4 L1.8 2.2 L3.7 2.2 Z" fill="none" stroke="#e6e9ef" stroke-width="1.3"/><path d="M5 3.2 L6.6 4.1 V5.9 L5 6.8 L3.4 5.9 V4.1 Z" fill="#e6e9ef"/></svg>
<svg style="left:10px;top:328.2px" width="10" height="10" viewBox="0 0 10 10"><path d="M3.6 1.2 L8.8 3.2 L8.6 8.6 L3.4 9 L1 5 Z" fill="none" stroke="#e6e9ef" stroke-width="1.3" stroke-linejoin="round"/></svg>
<svg style="left:10px;top:351.5px" width="10" height="10" viewBox="0 0 10 10"><path d="M5 0.8 L8.9 3 V7.1 L5 9.3 L1.1 7.1 V3 Z M1.1 3 L5 5.1 L8.9 3 M5 5.1 V9.3" fill="none" stroke="#e6e9ef" stroke-width="1.3"/></svg>
</body></html>
